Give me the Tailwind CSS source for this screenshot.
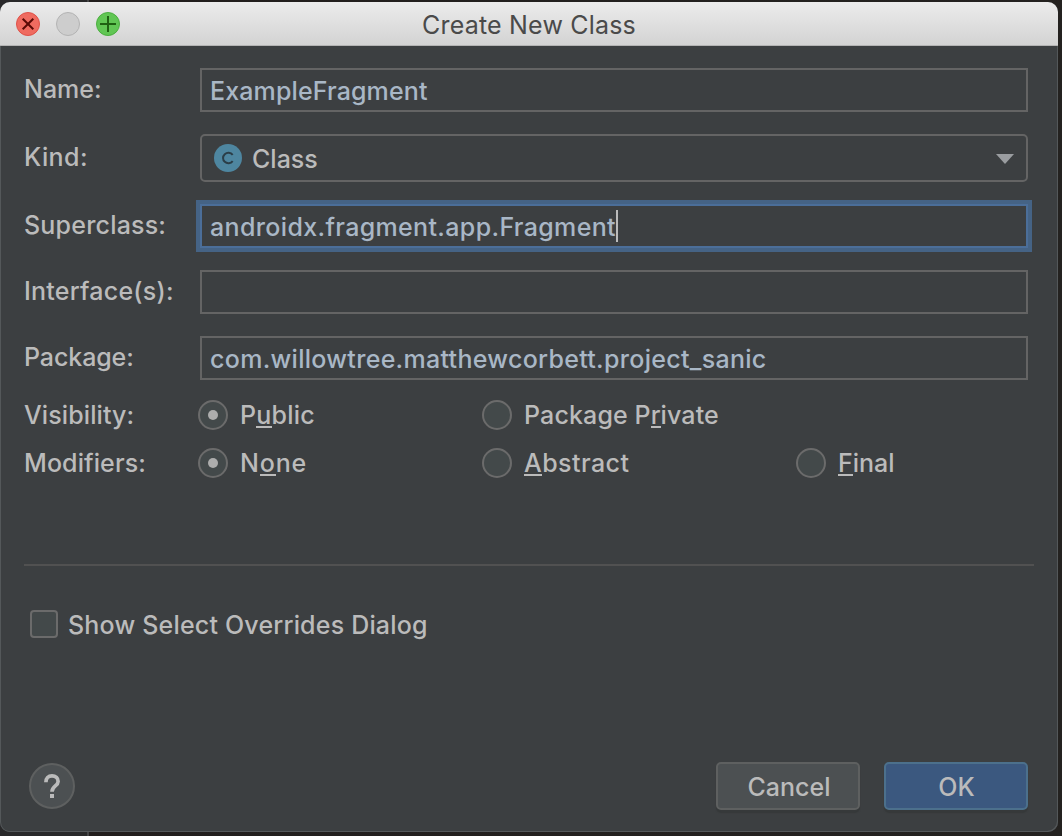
<!DOCTYPE html>
<html lang="en">
<head>
<meta charset="utf-8">
<title>Create New Class</title>
<script src="https://cdn.jsdelivr.net/npm/@tailwindcss/browser@4"></script>
</head>
<body class="h-[836px] w-[1062px] overflow-hidden bg-[linear-gradient(to_right,#29292a_87px,#454546_87px,#454546_89px,#221e1d_89px,#242220)] pt-[2px] font-['Inter',sans-serif] text-[25px] leading-[30px] font-medium text-[#bbbbbb]">
<div class="flex h-[830px] w-[1058px] flex-col overflow-hidden rounded-[10px] bg-[#3c3f41] shadow-[inset_1px_0_0_#54585a,inset_-1px_-1px_0_#54585a]">
  <header class="relative flex h-11 shrink-0 items-center border-b border-[#b4b4b4] bg-linear-to-b from-[#ececec] to-[#d3d3d3] pl-4">
    <div class="flex gap-4">
      <svg class="size-6" viewBox="0 0 24 24"><circle cx="12" cy="12" r="11.5" fill="#ef6b60" stroke="#de5148"/><path d="M6.7 6.7 17.3 17.3M17.3 6.7 6.7 17.3" stroke="#5b0a06" stroke-width="2"/></svg>
      <svg class="size-6" viewBox="0 0 24 24"><circle cx="12" cy="12" r="11.5" fill="#cdcdcd" stroke="#b3b3b3"/></svg>
      <svg class="size-6" viewBox="0 0 24 24"><circle cx="12" cy="12" r="11.5" fill="#61c654" stroke="#4cae40"/><path d="M12 4v16M4 12h16" stroke="#1f6112" stroke-width="2"/></svg>
    </div>
    <h1 class="absolute inset-x-0 top-2 text-center font-normal tracking-[0.2px] text-[#4a4a4a]">Create New Class</h1>
  </header>
  <main class="flex grow flex-col pt-[22px]">
    <div class="flex flex-col gap-[22px] pr-[30px] pl-6">
      <div class="flex h-11"><div class="flex w-[176px] items-center pb-[2px]"><span>Name:</span></div><div class="flex grow items-center border-2 border-[#646464] pt-[2px] pl-2 text-[#a9b7c6]"><span class="tracking-[0.13px]">ExampleFragment</span></div></div>
      <div class="flex h-12"><div class="flex w-[176px] items-center pb-[2px]"><span class="tracking-[0.4px]">Kind:</span></div><div class="flex grow items-center rounded-[5px] border-2 border-[#646464] pr-3 pl-3">
        <svg class="size-7" viewBox="0 0 28 28"><circle cx="14" cy="14" r="14" fill="#4e86a0"/><path d="M18.7 10.8A5.4 5.2 0 1 0 18.7 17.2" fill="none" stroke="#2b3e48" stroke-width="2"/></svg>
        <span class="ml-[10px] grow pt-[2px]">Class</span>
        <svg class="mt-[2px] h-[10px] w-[18px]" viewBox="0 0 18 10"><path d="M0 0h18L9 10z" fill="#9a9da0"/></svg>
      </div></div>
      <div class="flex h-11"><div class="flex w-[176px] items-center pb-[2px]"><span class="tracking-[0.2px]">Superclass:</span></div><div class="flex grow items-center border-2 border-[#4b6e99] pt-[2px] pl-2 text-[#a9b7c6] outline-4 outline-[#456385]"><span class="tracking-[0.35px]">androidx.fragment.app.Fragment</span><i class="-mt-[2px] h-8 w-[2px] bg-[#bbbbbb]"></i></div></div>
      <div class="flex h-11"><div class="flex w-[176px] items-center pb-[2px]"><span class="tracking-[0.23px]">Interface(s):</span></div><div class="grow border-2 border-[#646464]"></div></div>
      <div class="flex h-11"><div class="flex w-[176px] items-center pb-[2px]"><span class="tracking-[-0.1px]">Package:</span></div><div class="flex grow items-center border-2 border-[#646464] pt-[2px] pl-2 text-[#a9b7c6]"><span class="tracking-[0.3px]">com.willowtree.matthewcorbett.project_sanic</span></div></div>
    </div>
    <div class="mt-5 grid grid-cols-[174px_284px_314px_auto] gap-y-[18px] pl-6">
      <div><span class="tracking-[0.1px]">Visibility:</span></div>
      <div class="flex gap-3"><i class="flex size-[30px] items-center justify-center rounded-full border-2 border-[#6b6b6b] bg-[#43494a]"><i class="size-[10px] rounded-full bg-[#adadad]"></i></i><span class="tracking-[0.2px]">P<span class="inline-block h-7 border-b-2 border-[#bbbbbb] align-top">u</span>blic</span></div>
      <div class="flex gap-3"><i class="size-[30px] rounded-full border-2 border-[#6b6b6b] bg-[#43494a]"></i><span class="tracking-[0.13px]">Package P<span class="inline-block h-7 border-b-2 border-[#bbbbbb] align-top">r</span>ivate</span></div>
      <div></div>
      <div><span class="tracking-[0.1px]">Modifiers:</span></div>
      <div class="flex gap-3"><i class="flex size-[30px] items-center justify-center rounded-full border-2 border-[#6b6b6b] bg-[#43494a]"><i class="size-[10px] rounded-full bg-[#adadad]"></i></i><span class="tracking-[0.8px]">N<span class="inline-block h-7 border-b-2 border-[#bbbbbb] align-top">o</span>ne</span></div>
      <div class="flex gap-3"><i class="size-[30px] rounded-full border-2 border-[#6b6b6b] bg-[#43494a]"></i><span class="tracking-[0.45px]"><span class="inline-block h-7 border-b-2 border-[#bbbbbb] align-top">A</span>bstract</span></div>
      <div class="flex gap-3"><i class="size-[30px] rounded-full border-2 border-[#6b6b6b] bg-[#43494a]"></i><span><span class="inline-block h-7 border-b-2 border-[#bbbbbb] align-top">F</span>inal</span></div>
    </div>
    <hr class="mt-[86px] mr-6 ml-6 border-t-2 border-[#515151]">
    <div class="mt-11 flex h-7 items-center gap-[10px] pl-[30px]"><i class="size-7 rounded-[4px] border-2 border-[#6b6b6b] bg-[#43494a]"></i><span class="pt-[2px] tracking-[0.19px]">Show Select Overrides Dialog</span></div>
    <footer class="mt-auto mb-[22px] flex h-12 items-center gap-6 pr-[30px] pl-[29px]">
      <div class="mr-auto flex size-[46px] items-center justify-center rounded-full border-2 border-[#5e6060] bg-[#4c5052]">
        <svg class="h-6 w-4" viewBox="0 0 16 24"><path d="M1.9 8.2C1.9 4.3 4.3 1.9 8 1.9s6.100 2.300 6.100 5.500c0 4.600-6.100 4.600-6.100 10.300" fill="none" stroke="#bbbbbb" stroke-width="3.700"/><path d="M6 20h4v4H6z" fill="#bbbbbb"/></svg>
      </div>
      <div class="flex h-12 w-36 items-center justify-center rounded-[5px] border-2 border-[#5e6060] bg-[#4c5052] pt-[2px] pl-[2px] shadow-[0_3px_1px_#36393a]"><span>Cancel</span></div>
      <div class="flex h-12 w-36 items-center justify-center rounded-[5px] border-2 border-[#4c708c] bg-[#3b587f] pt-[2px] pl-px shadow-[0_3px_1px_#36393a]"><span>OK</span></div>
    </footer>
  </main>
</div>
</body>
</html>
